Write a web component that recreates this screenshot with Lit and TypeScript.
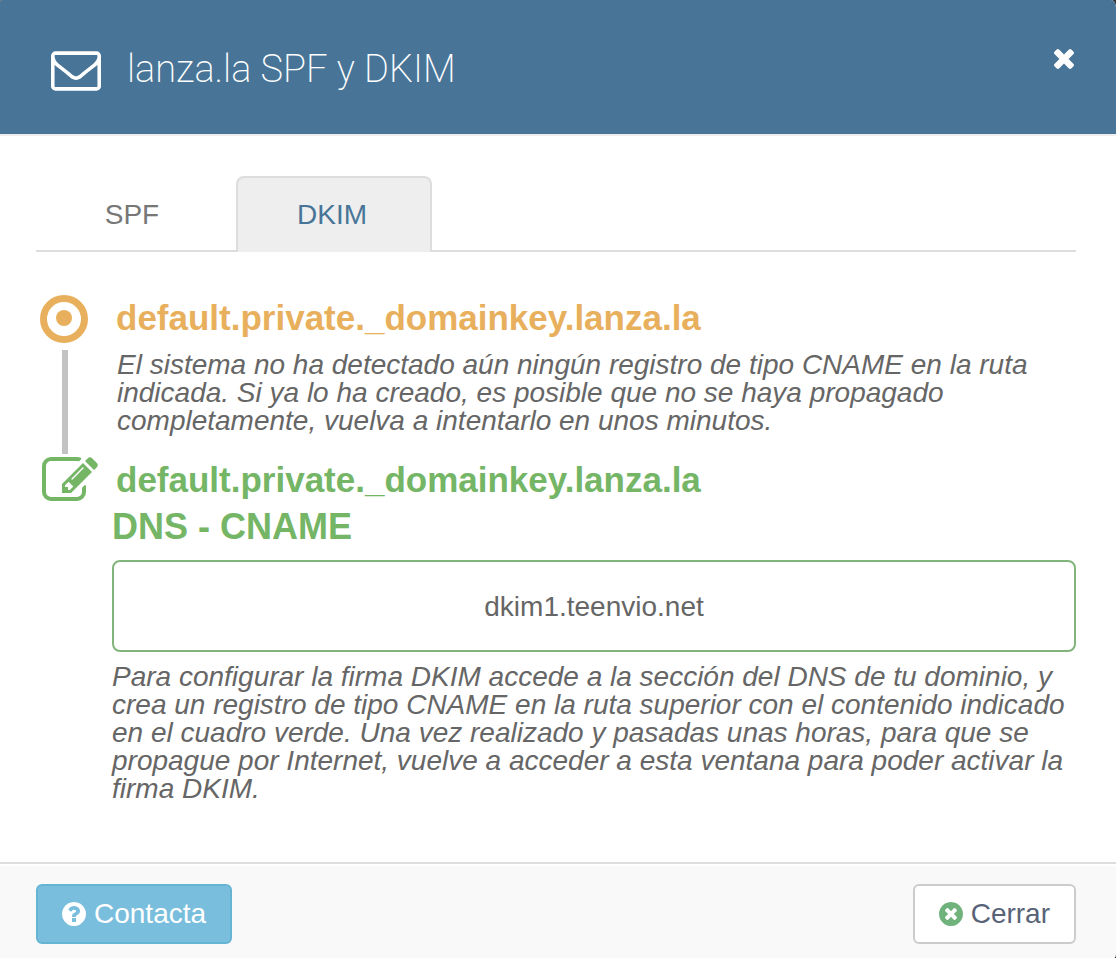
import { LitElement, html, css, svg } from "lit";
import { customElement, state } from "lit/decorators.js";

const DISC =
  "q0 209-103 385.500t-279.500 279.500-385.500 103-385.500-103-279.500-279.500-103-385.500 103-385.500 279.500-279.500 385.500-103 385.500 103 279.500 279.500 103 385.500z";

const icons: Record<string, { box: string; shape: unknown }> = {
  envelope: {
    box: "0 256 1792 1408",
    shape: svg`<path d="M1664 1504v-768q-32 36-69 66-268 206-426 338-51 43-83 67t-86.500 48.500-102.500 24.500h-2q-48 0-102.500-24.500t-86.500-48.500-83-67q-158-132-426-338-37-30-69-66v768q0 13 9.500 22.500t22.500 9.500h1472q13 0 22.500-9.500t9.500-22.500zm0-1051v-24.500l-.5-13-3-12.500-5.500-9-9-7.500-14-2.500h-1472q-13 0-22.500 9.500t-9.500 22.500q0 168 147 284 193 152 401 317 6 5 35 29.500t46 37.500 44.500 31.500 50.500 27.500 43 9h2q20 0 43-9t50.500-27.500 44.500-31.500 46-37.500 35-29.500q208-165 401-317 54-43 100.500-115.500t46.500-131.500zm128-37v1088q0 66-47 113t-113 47h-1472q-66 0-113-47t-47-113v-1088q0-66 47-113t113-47h1472q66 0 113 47t47 113z"/>`,
  },
  times: {
    box: "302 366 1188 1188",
    shape: svg`<path d="M1490 1322q0 40-28 68l-136 136q-28 28-68 28t-68-28l-294-294-294 294q-28 28-68 28t-68-28l-136-136q-28-28-28-68t28-68l294-294-294-294q-28-28-28-68t28-68l136-136q28-28 68-28t68 28l294 294 294-294q28-28 68-28t68 28l136 136q28 28 28 68t-28 68l-294 294 294 294q28 28 28 68z"/>`,
  },
  dot: {
    box: "0 0 48 48",
    shape: svg`<circle cx="24" cy="24" r="20.500" fill="none" stroke="currentColor" stroke-width="7"/><circle cx="24" cy="23" r="8"/>`,
  },
  edit: {
    box: "0 128 1792 1408",
    shape: svg`<path d="M888 1184l116-116-152-152-116 116v56h96v96h56zm440-720q-16-16-33 1l-350 350q-17 17-1 33t33-1l350-350q17-17 1-33zm80 594v190q0 119-84.500 203.500t-203.500 84.500h-832q-119 0-203.500-84.500t-84.500-203.500v-832q0-119 84.500-203.500t203.500-84.500h832q63 0 117 25 15 7 18 23 3 17-9 29l-49 49q-14 14-32 8-23-6-45-6h-832q-66 0-113 47t-47 113v832q0 66 47 113t113 47h832q66 0 113-47t47-113v-126q0-13 9-22l64-64q15-15 35-7t20 29zm-96-738l288 288-672 672h-288v-288zm444 132l-92 92-288-288 92-92q28-28 68-28t68 28l152 152q28 28 28 68t-28 68z"/>`,
  },
  question: {
    box: "128 128 1536 1536",
    shape: svg`<path d=${
      "M1024 1376v-192q0-14-9-23t-23-9h-192q-14 0-23 9t-9 23v192q0 14 9 23t23 9h192q14 0 23-9t9-23zm256-672q0-88-55.500-163t-138.500-116-170-41q-243 0-371 213-15 24 8 42l132 100q7 6 19 6 16 0 25-12 53-68 86-92 34-24 86-24 48 0 85.500 26t37.500 59q0 38-20 61t-68 45q-63 28-115.500 86.500t-52.500 125.500v36q0 14 9 23t23 9h192q14 0 23-9t9-23q0-19 21.500-49.500t54.500-49.500q32-18 49-28.500t46-35 44.500-48 28-60.500 12.500-81zm384 192" +
      DISC
    }/>`,
  },
  cancel: {
    box: "128 128 1536 1536",
    shape: svg`<path d=${
      "M1277 1122q0-26-19-45l-181-181 181-181q19-19 19-45 0-27-19-46l-90-90q-19-19-46-19-26 0-45 19l-181 181-181-181q-19-19-45-19-27 0-46 19l-90 90q-19 19-19 46 0 26 19 45l181 181-181 181q-19 19-19 45 0 27 19 46l90 90q19 19 46 19 26 0 45-19l181-181 181 181q19 19 45 19 27 0 46-19l90-90q19-19 19-46zm387-226" +
      DISC
    }/>`,
  },
};

const icon = (name: string) => html`<svg
  class="icon icon-${name}"
  viewBox=${icons[name].box}
  aria-hidden="true"
>${icons[name].shape}</svg>`;

@customElement("app-root")
export class AppRoot extends LitElement {
  @state() private tab = "DKIM";

  static styles = css`
    :host {
      display: block;
      background: #333;
      font-family: "Liberation Sans", Arial, sans-serif;
      font-size: 28px;
      line-height: 28px;
      color: #666;
    }
    * {
      box-sizing: border-box;
    }
    h1,
    h2,
    p,
    ol {
      margin: 0;
      padding: 0;
    }
    button {
      font: inherit;
      cursor: pointer;
    }
    .icon {
      display: block;
      flex: none;
      fill: currentColor;
    }
    .icon-envelope {
      width: 50px;
      height: 40px;
    }
    .icon-times {
      width: 20px;
      height: 20px;
    }
    .icon-dot {
      width: 48px;
      height: 48px;
    }
    .icon-edit {
      width: 56px;
      height: 44px;
    }
    .icon-question,
    .icon-cancel {
      width: 24px;
      height: 24px;
    }
    .icon-cancel {
      color: #70b27c;
    }
    .dialog {
      display: flex;
      flex-direction: column;
      min-height: 100vh;
      overflow: hidden;
      background: #fff;
      border-radius: 2px 5px 2px 0 / 2px 8px 6px 0;
    }
    .header {
      display: flex;
      align-items: flex-start;
      gap: 26px;
      padding: 40px 42px 36px 51px;
      background: #487597;
      color: #fff;
      border-bottom: 2px solid #eee;
    }
    .header .icon-envelope {
      margin-top: 11px;
    }
    .title {
      flex: 1;
      font-family: Roboto, "Liberation Sans", sans-serif;
      font-size: 38px;
      line-height: 58px;
      font-weight: 200;
    }
    .close {
      margin-top: 9px;
      padding: 0;
      border: 0;
      background: none;
      color: inherit;
    }
    .body {
      flex: 1;
      padding: 40px 40px 58px 36px;
    }
    .tabs {
      display: flex;
      gap: 4px;
      border-bottom: 2px solid #ddd;
    }
    .tab {
      min-width: 196px;
      height: 76px;
      margin-bottom: -2px;
      padding: 0 28px 0 24px;
      border: 2px solid transparent;
      border-bottom: 0;
      border-radius: 8px 8px 0 0;
      background: none;
      color: #777;
    }
    .tab[aria-selected="true"] {
      background: #eee;
      border-color: #ddd;
      color: #487597;
    }
    .steps {
      list-style: none;
      margin-top: 43px;
    }
    .step {
      display: grid;
      grid-template-columns: 76px minmax(0, 1fr);
    }
    .marker {
      display: flex;
      flex-direction: column;
      gap: 7px;
      padding-left: 4px;
    }
    .bar {
      flex: 1;
      width: 6px;
      margin-left: 22px;
      background: #c3c3c3;
    }
    .pending .marker {
      color: #e8b05d;
    }
    .edit .marker {
      padding-left: 6px;
    }
    .name,
    .kind {
      line-height: 46px;
      font-weight: bold;
      overflow-wrap: anywhere;
    }
    .name {
      font-size: 35px;
      padding-left: 4px;
    }
    .kind {
      font-size: 36px;
      padding-top: 1px;
    }
    .pending .name {
      color: #e8b05d;
    }
    .edit {
      margin-top: 3px;
      color: #74b566;
    }
    .note {
      font-style: italic;
      color: #666;
    }
    .pending .note {
      padding: 10px 0 19px 5px;
    }
    .value {
      margin: 10px 0 11px;
      padding: 31px 24px 29px;
      border: 2px solid #82b57c;
      border-radius: 8px;
      text-align: center;
      color: #666;
      overflow-wrap: anywhere;
    }
    .footer {
      display: flex;
      justify-content: space-between;
      padding: 20px 40px 14px 36px;
      border-top: 2px solid #ddd;
      background: #f9f9f9;
      box-shadow: inset 0 2px 0 #fff;
    }
    .action {
      display: flex;
      align-items: center;
      gap: 8px;
      height: 60px;
      padding: 0 24px;
      border: 2px solid #ccc;
      border-radius: 6px;
      background: #fff;
      color: #596377;
    }
    .contact {
      background: #79bedd;
      border-color: #66b4d4;
      color: #fff;
    }
  `;

  private renderTab(name: string) {
    return html`<button
      class="tab"
      type="button"
      role="tab"
      aria-selected=${this.tab === name ? "true" : "false"}
      @click=${() => (this.tab = name)}
    >${name}</button>`;
  }

  render() {
    const host = "default.private._domainkey.lanza.la";
    return html`<section class="dialog" role="dialog" aria-labelledby="title">
      <header class="header">
        ${icon("envelope")}
        <h1 class="title" id="title">lanza.la SPF y DKIM</h1>
        <button class="close" type="button" aria-label="Cerrar ventana">${icon("times")}</button>
      </header>
      <main class="body">
        <div class="tabs" role="tablist">${this.renderTab("SPF")}${this.renderTab("DKIM")}</div>
        <ol class="steps">
          <li class="step pending">
            <div class="marker">${icon("dot")}<span class="bar"></span></div>
            <div>
              <h2 class="name">${host}</h2>
              <p class="note">
                El sistema no ha detectado aún ningún registro de tipo CNAME en la ruta indicada. Si ya
                lo ha creado, es posible que no se haya propagado completamente, vuelva a intentarlo en
                unos minutos.
              </p>
            </div>
          </li>
          <li class="step edit">
            <div class="marker">${icon("edit")}</div>
            <div>
              <h2 class="name">${host}</h2>
              <h2 class="kind">DNS - CNAME</h2>
              <div class="value">dkim1.teenvio.net</div>
              <p class="note">
                Para configurar la firma DKIM accede a la sección del DNS de tu dominio, y crea un
                registro de tipo CNAME en la ruta superior con el contenido indicado en el cuadro verde.
                Una vez realizado y pasadas unas horas, para que se propague por Internet, vuelve a
                acceder a esta ventana para poder activar la firma DKIM.
              </p>
            </div>
          </li>
        </ol>
      </main>
      <footer class="footer">
        <button class="action contact" type="button">${icon("question")}Contacta</button>
        <button class="action" type="button">${icon("cancel")}Cerrar</button>
      </footer>
    </section>`;
  }
}
